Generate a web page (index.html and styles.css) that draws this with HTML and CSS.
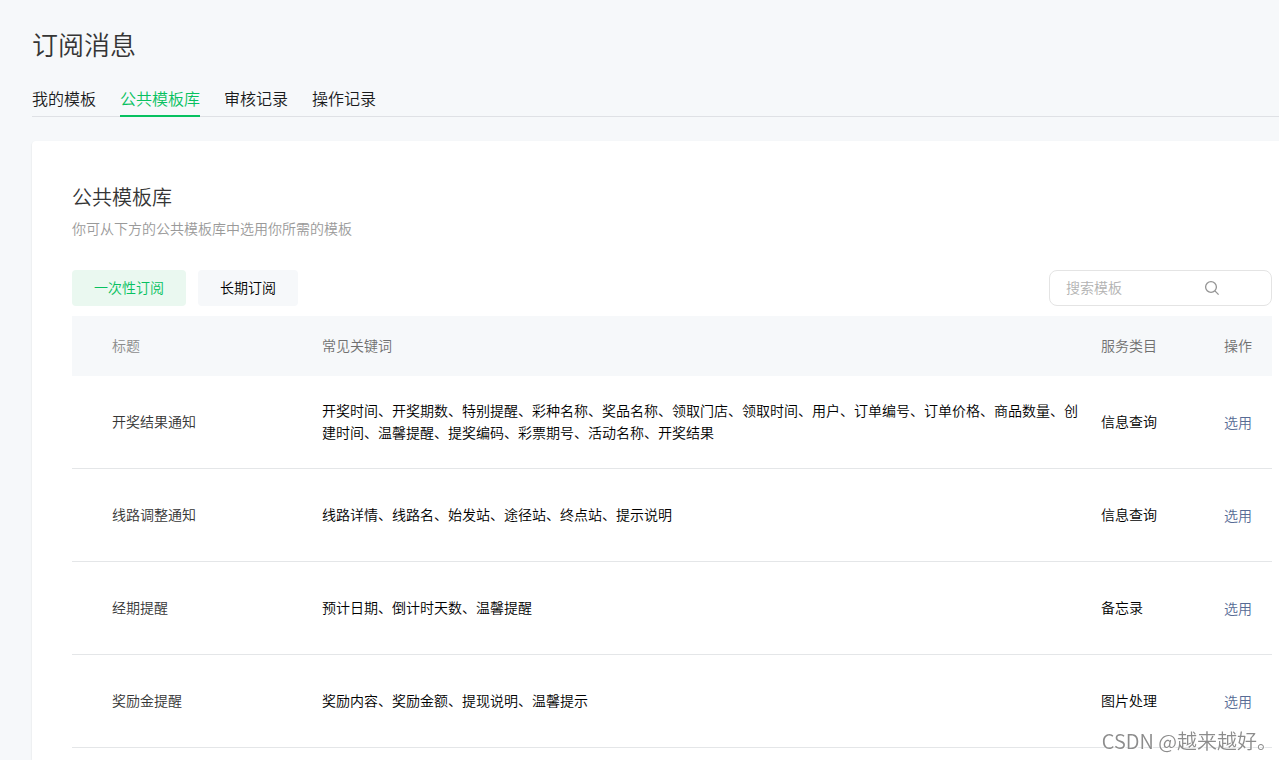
FILE: index.html
```html
<!DOCTYPE html>
<html lang="zh-CN">
<head>
<meta charset="utf-8">
<meta name="viewport" content="width=device-width, initial-scale=1">
<title>订阅消息</title>
<link rel="stylesheet" href="styles.css">
</head>
<body>
<div class="page">
  <h1 class="page-title">订阅消息</h1>
  <nav class="tabs">
    <a class="tab" href="#mine">我的模板</a>
    <a class="tab tab-active" href="#library" aria-current="page">公共模板库</a>
    <a class="tab" href="#review">审核记录</a>
    <a class="tab" href="#log">操作记录</a>
  </nav>
  <main class="card">
    <h2 class="card-title">公共模板库</h2>
    <p class="card-desc">你可从下方的公共模板库中选用你所需的模板</p>
    <div class="toolbar">
      <button class="filter filter-active" type="button">一次性订阅</button>
      <button class="filter" type="button">长期订阅</button>
      <div class="search">
        <input class="search-input" type="text" placeholder="搜索模板" aria-label="搜索模板">
        <button class="search-button" type="button" aria-label="搜索">
          <svg width="16" height="16" viewBox="0 0 16 16" fill="none" stroke="#949494" stroke-width="1.3" aria-hidden="true">
            <circle cx="7" cy="7" r="5.4"/>
            <path d="M10.9 10.9L14.6 14.6"/>
          </svg>
        </button>
      </div>
    </div>
    <table class="table">
      <thead>
        <tr><th class="col-title">标题</th><th class="col-keys">常见关键词</th><th class="col-cat">服务类目</th><th class="col-op">操作</th></tr>
      </thead>
      <tbody>
        <tr><td class="name">开奖结果通知</td><td class="keys">开奖时间、开奖期数、特别提醒、彩种名称、奖品名称、领取门店、领取时间、用户、订单编号、订单价格、商品数量、创建时间、温馨提醒、提奖编码、彩票期号、活动名称、开奖结果</td><td>信息查询</td><td class="op"><a class="pick" href="#pick-1">选用</a></td></tr>
        <tr><td class="name">线路调整通知</td><td class="keys">线路详情、线路名、始发站、途径站、终点站、提示说明</td><td>信息查询</td><td class="op"><a class="pick" href="#pick-2">选用</a></td></tr>
        <tr><td class="name">经期提醒</td><td class="keys">预计日期、倒计时天数、温馨提醒</td><td>备忘录</td><td class="op"><a class="pick" href="#pick-3">选用</a></td></tr>
        <tr><td class="name">奖励金提醒</td><td class="keys">奖励内容、奖励金额、提现说明、温馨提示</td><td>图片处理</td><td class="op"><a class="pick" href="#pick-4">选用</a></td></tr>
      </tbody>
    </table>
  </main>
</div>
<div class="watermark">CSDN @越来越好。</div>
</body>
</html>
```
FILE: styles.css
```css
* { box-sizing: border-box; }
body {
  margin: 0;
  background: #f6f8fa;
  color: #000;
  font-family: "Noto Sans CJK SC", sans-serif;
  font-size: 14px;
  font-weight: 350;
  line-height: 22px;
}
.page {
  display: flex;
  flex-direction: column;
  min-height: 100vh;
  padding: 24px 0 0 32px;
}
.page-title {
  margin: 0 0 22px;
  font-size: 26px;
  font-weight: 350;
  line-height: 40px;
  color: #353535;
}
.tabs {
  display: flex;
  gap: 24px;
  border-bottom: 1px solid #dfe1e5;
  margin-bottom: 24px;
}
.tab {
  height: 30px;
  padding-top: 1px;
  font-size: 16px;
  line-height: 22px;
  color: #1a1b1c;
  text-decoration: none;
}
.tab-active {
  height: 31px;
  margin-bottom: -1px;
  color: #07c160;
  border-bottom: 2px solid #07c160;
}
.card {
  flex: 1;
  padding: 40px 7px 12px 40px;
  background: #fff;
  border-radius: 4px 0 0 0;
  box-shadow: 0 1px 2px rgba(0, 0, 0, 0.12);
}
.card-title {
  margin: 0 0 4px;
  font-size: 20px;
  font-weight: 350;
  line-height: 32px;
  color: #353535;
}
.card-desc {
  margin: 0 0 31px;
  color: #9a9a9a;
}
.toolbar {
  display: flex;
  gap: 12px;
  margin-bottom: 10px;
}
.filter {
  height: 36px;
  padding: 0 22px 2px;
  border: 0;
  border-radius: 4px;
  background: #f6f8fa;
  color: #000;
  font: inherit;
}
.filter-active {
  background: #eaf8f0;
  color: #07c160;
}
.search {
  display: flex;
  align-items: center;
  width: 223px;
  height: 36px;
  margin-left: auto;
  padding-left: 16px;
  border: 1px solid #e4e4e4;
  border-radius: 8px;
}
.search-input {
  width: 138px;
  padding: 0 0 2px;
  border: 0;
  outline: 0;
  background: none;
  color: #000;
  font: inherit;
}
.search-input::placeholder { color: #b2b2b2; opacity: 1; }
.search-button {
  display: flex;
  padding: 0;
  border: 0;
  background: none;
}
.table {
  width: 100%;
  border-collapse: separate;
  border-spacing: 0;
  table-layout: fixed;
}
th, td {
  padding: 0 0 2px;
  text-align: left;
  font-weight: 350;
}
th {
  height: 60px;
  background: #f6f8fa;
  color: #707070;
}
td {
  height: 93px;
  border-bottom: 1px solid #e4e6e8;
}
.col-title { width: 250px; padding-left: 40px; color: #8c8c8c; }
.col-cat { width: 123px; }
.col-op { width: 48px; }
.name { padding-left: 40px; color: #353535; }
.keys { padding-right: 20px; }
.op { padding-bottom: 0; }
.pick { color: #576b95; text-decoration: none; }
.watermark {
  position: fixed;
  right: 2px;
  bottom: 4px;
  font-size: 20px;
  line-height: 30px;
  color: #8c8c8c;
  text-shadow: 1px 1px 1px #fff;
}
```
